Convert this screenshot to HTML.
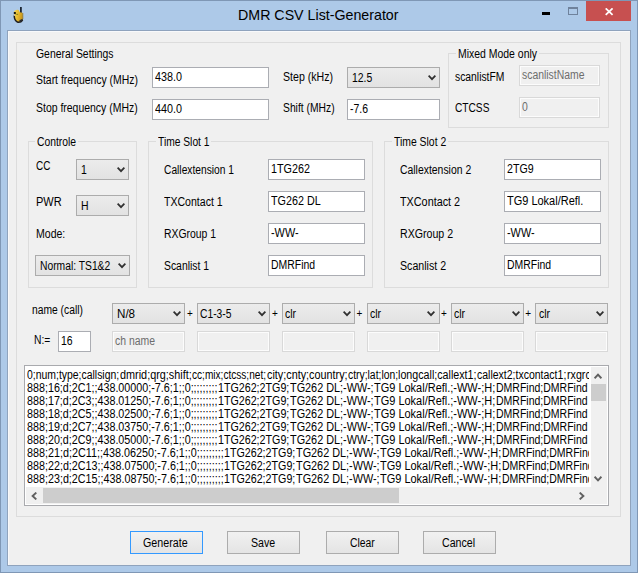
<!DOCTYPE html>
<html><head><meta charset="utf-8"><title>DMR CSV List-Generator</title>
<style>
html,body{margin:0;padding:0}
body{width:638px;height:573px;overflow:hidden;position:relative;background:#adc9e8;font-family:"Liberation Sans",Arial,sans-serif;font-size:12px;color:#000}
.abs,.t,.tb,.cb,.gb,.btn,.dtb{position:absolute;box-sizing:border-box}
#frame{left:0;top:0;width:638px;height:573px;border:1px solid #7f97b5}
#client{left:7px;top:30px;width:624px;height:536px;border:1px solid #8fa3bd;background:#f0f0f0;box-shadow:inset 1px 1px 0 #f8f9fb}
.t{white-space:nowrap;line-height:16px;height:16px;transform-origin:0 50%;transform:scaleX(0.87)}
.tb{background:#fff;border:1px solid #abadb3;height:21px}
.dtb{background:#f0f0f0;border:1px solid #d9d9d9;height:20px;box-shadow:inset 0 0 0 1px #fcfcfc}
.cb{background:linear-gradient(#ececec,#e2e2e2);border:1px solid #acacac;height:21px}
.gb{border:1px solid #dcdcdc}
.btn{background:linear-gradient(#f1f1f1,#e4e4e4);border:1px solid #acacac;height:23px}
.g{color:#6d6d6d}
</style></head><body>
<div id="frame" class="abs"></div>

<div class="abs" style="left:586px;top:1px;width:45px;height:20px;background:#c75050"></div>
<svg class="abs" style="left:605px;top:8px" width="9" height="8" viewBox="0 0 9 8"><path d="M0.7 0.4 L7.6 6.8 M7.6 0.4 L0.7 6.8" stroke="#fff" stroke-width="1.8" fill="none"/></svg>
<div class="abs" style="left:542px;top:12px;width:8px;height:3px;background:#000"></div>
<div class="abs" style="left:568px;top:7px;width:10px;height:8px;border:1px solid #6f829c;border-top-width:2px"></div>
<div class="t" style="left:238.2px;top:7.5px;transform:scaleX(0.9485);font-size:15px;line-height:20px;height:20px;top:5.1px;">DMR CSV List-Generator</div>
<svg class="abs" style="left:12px;top:5px" width="14" height="20" viewBox="12 5 14 20">
<defs><linearGradient id="ig" x1="0" y1="0" x2="1" y2="0.3"><stop offset="0" stop-color="#f3d654"/><stop offset="0.5" stop-color="#e8bc30"/><stop offset="1" stop-color="#c8961c"/></linearGradient></defs>
<rect x="20" y="7" width="1.8" height="9" fill="#1d2734"/>
<path d="M14.2 11.3 Q16.5 9.4 18.6 10 L19.8 12.2 L22.5 12.8 L22.8 20 Q20.5 23 17.3 22.2 Q14.2 20.5 14 16 Z" fill="url(#ig)"/>
<path d="M14.2 15.6 Q14.3 20.5 17.4 22.1 Q20.6 22.9 22.7 20" fill="none" stroke="#1e1e22" stroke-width="1.5"/>
<path d="M19.3 20.2 L22.6 18.8 L22.6 20.6 L20.2 22.3 Z" fill="#2a2a2c"/>
<path d="M22.8 13 L22.8 19" fill="none" stroke="#8a6a14" stroke-width="0.7"/>
<rect x="13.8" y="12" width="2" height="2.2" fill="#15150f"/>
<rect x="16.3" y="13.8" width="1.8" height="1.2" fill="#8e8a20"/>
<rect x="14" y="14.6" width="1" height="1" fill="#f4ecd0"/>
</svg>
<div id="client" class="abs"></div>
<div class="gb" style="left:16px;top:42px;width:605px;height:475px"></div>
<div class="t" style="left:35.5px;top:46px;transform:scaleX(0.867);">General Settings</div>
<div class="t" style="left:36.3px;top:71.6px;transform:scaleX(0.869);">Start frequency (MHz)</div>
<div class="t" style="left:36.3px;top:100px;transform:scaleX(0.8713);">Stop frequency (MHz)</div>
<div class="tb" style="left:152px;top:67px;width:117px;height:21px"></div>
<div class="t" style="left:155px;top:68.7px;transform:scaleX(0.8991);">438.0</div>
<div class="tb" style="left:152px;top:99px;width:117px;height:21px"></div>
<div class="t" style="left:155px;top:100.7px;transform:scaleX(0.8991);">440.0</div>
<div class="t" style="left:283px;top:68.8px;transform:scaleX(0.882);">Step (kHz)</div>
<div class="t" style="left:283px;top:99.8px;transform:scaleX(0.86);">Shift (MHz)</div>
<div class="cb" style="left:347px;top:67px;width:93px;height:21px"></div>
<svg class="abs" style="left:427.5px;top:75px" width="8" height="6" viewBox="0 0 8 6"><path d="M0.6 0.7 L4 4.2 L7.4 0.7" fill="none" stroke="#303030" stroke-width="1.8"/></svg>
<div class="t" style="left:351.5px;top:69.8px;">12.5</div>
<div class="tb" style="left:347px;top:99px;width:93px;height:21px"></div>
<div class="t" style="left:350px;top:100.7px;">-7.6</div>
<div class="gb" style="left:448px;top:53px;width:161px;height:75px"></div>
<div class="abs" style="left:455.6px;top:53px;width:83.0px;height:1px;background:#f0f0f0"></div>
<div class="t" style="left:457.6px;top:45.6px;transform:scaleX(0.8708);">Mixed Mode only</div>
<div class="t" style="left:454.6px;top:68.5px;transform:scaleX(0.8615);">scanlistFM</div>
<div class="t" style="left:454.6px;top:99.8px;transform:scaleX(0.8458);">CTCSS</div>
<div class="dtb" style="left:519px;top:65px;width:81px;height:20.5px"></div>
<div class="t g" style="left:522px;top:67px;transform:scaleX(0.8677);">scanlistName</div>
<div class="dtb" style="left:519px;top:97px;width:81px;height:20.5px"></div>
<div class="t g" style="left:522px;top:99px;">0</div>
<div class="gb" style="left:28px;top:141px;width:109px;height:146.5px"></div>
<div class="abs" style="left:34.6px;top:141px;width:43.1px;height:1px;background:#f0f0f0"></div>
<div class="t" style="left:36.6px;top:133.6px;transform:scaleX(0.862);">Controle</div>
<div class="t" style="left:35.6px;top:157.6px;transform:scaleX(0.8303);">CC</div>
<div class="t" style="left:36.3px;top:193.5px;transform:scaleX(0.9179);">PWR</div>
<div class="t" style="left:36.3px;top:226px;transform:scaleX(0.8783);">Mode:</div>
<div class="cb" style="left:76px;top:159px;width:53px;height:21px"></div>
<svg class="abs" style="left:116.5px;top:167px" width="8" height="6" viewBox="0 0 8 6"><path d="M0.6 0.7 L4 4.2 L7.4 0.7" fill="none" stroke="#303030" stroke-width="1.8"/></svg>
<div class="t" style="left:80.5px;top:161.8px;">1</div>
<div class="cb" style="left:76px;top:195px;width:53px;height:21px"></div>
<svg class="abs" style="left:116.5px;top:203px" width="8" height="6" viewBox="0 0 8 6"><path d="M0.6 0.7 L4 4.2 L7.4 0.7" fill="none" stroke="#303030" stroke-width="1.8"/></svg>
<div class="t" style="left:80.5px;top:197.8px;">H</div>
<div class="cb" style="left:35px;top:255px;width:95px;height:21px"></div>
<svg class="abs" style="left:117.5px;top:263px" width="8" height="6" viewBox="0 0 8 6"><path d="M0.6 0.7 L4 4.2 L7.4 0.7" fill="none" stroke="#303030" stroke-width="1.8"/></svg>
<div class="t" style="left:39.5px;top:257.8px;transform:scaleX(0.8581);">Normal: TS1&amp;2</div>
<div class="gb" style="left:148px;top:141px;width:225px;height:146.5px"></div>
<div class="abs" style="left:155.5px;top:141px;width:55.5px;height:1px;background:#f0f0f0"></div>
<div class="t" style="left:157.5px;top:133.6px;transform:scaleX(0.8548);">Time Slot 1</div>
<div class="t" style="left:164px;top:161.6px;transform:scaleX(0.853);">Callextension 1</div>
<div class="tb" style="left:268px;top:159px;width:97px;height:21px"></div>
<div class="t" style="left:271px;top:160.7px;transform:scaleX(0.8995);">1TG262</div>
<div class="t" style="left:164px;top:193.7px;transform:scaleX(0.88);">TXContact 1</div>
<div class="tb" style="left:268px;top:191px;width:97px;height:21px"></div>
<div class="t" style="left:271px;top:192.7px;transform:scaleX(0.8978);">TG262 DL</div>
<div class="t" style="left:164px;top:225.8px;transform:scaleX(0.8662);">RXGroup 1</div>
<div class="tb" style="left:268px;top:223px;width:97px;height:21px"></div>
<div class="t" style="left:271px;top:224.7px;transform:scaleX(0.9068);">-WW-</div>
<div class="t" style="left:164px;top:257.9px;transform:scaleX(0.8649);">Scanlist 1</div>
<div class="tb" style="left:268px;top:255px;width:97px;height:21px"></div>
<div class="t" style="left:271px;top:256.7px;">DMRFind</div>
<div class="gb" style="left:384px;top:141px;width:225px;height:146.5px"></div>
<div class="abs" style="left:391.8px;top:141px;width:56.19999999999999px;height:1px;background:#f0f0f0"></div>
<div class="t" style="left:393.8px;top:133.6px;transform:scaleX(0.8664);">Time Slot 2</div>
<div class="t" style="left:399.6px;top:161.6px;transform:scaleX(0.8676);">Callextension 2</div>
<div class="tb" style="left:504px;top:159px;width:97px;height:21px"></div>
<div class="t" style="left:507px;top:160.7px;transform:scaleX(0.8862);">2TG9</div>
<div class="t" style="left:399.6px;top:193.7px;transform:scaleX(0.901);">TXContact 2</div>
<div class="tb" style="left:504px;top:191px;width:97px;height:21px"></div>
<div class="t" style="left:507px;top:192.7px;transform:scaleX(0.9151);">TG9 Lokal/Refl.</div>
<div class="t" style="left:399.6px;top:225.8px;transform:scaleX(0.8845);">RXGroup 2</div>
<div class="tb" style="left:504px;top:223px;width:97px;height:21px"></div>
<div class="t" style="left:507px;top:224.7px;transform:scaleX(0.9068);">-WW-</div>
<div class="t" style="left:399.6px;top:257.9px;transform:scaleX(0.886);">Scanlist 2</div>
<div class="tb" style="left:504px;top:255px;width:97px;height:21px"></div>
<div class="t" style="left:507px;top:256.7px;">DMRFind</div>
<div class="t" style="left:31.8px;top:302px;transform:scaleX(0.8575);">name (call)</div>
<div class="t" style="left:34.3px;top:332px;transform:scaleX(0.8572);">N:=</div>
<div class="tb" style="left:58px;top:331px;width:33px;height:21px"></div>
<div class="t" style="left:61px;top:332.7px;">16</div>
<div class="cb" style="left:112px;top:303px;width:73px;height:21px"></div>
<svg class="abs" style="left:172.5px;top:311px" width="8" height="6" viewBox="0 0 8 6"><path d="M0.6 0.7 L4 4.2 L7.4 0.7" fill="none" stroke="#303030" stroke-width="1.8"/></svg>
<div class="t" style="left:116.5px;top:305.8px;transform:scaleX(0.9686);">N/8</div>
<div class="dtb" style="left:112px;top:331px;width:73px;height:21px"></div>
<div class="t g" style="left:115px;top:333px;">ch name</div>
<div class="cb" style="left:197px;top:303px;width:73px;height:21px"></div>
<svg class="abs" style="left:257.5px;top:311px" width="8" height="6" viewBox="0 0 8 6"><path d="M0.6 0.7 L4 4.2 L7.4 0.7" fill="none" stroke="#303030" stroke-width="1.8"/></svg>
<div class="t" style="left:200.3px;top:305.8px;transform:scaleX(0.8559);">C1-3-5</div>
<div class="dtb" style="left:197px;top:331px;width:73px;height:21px"></div>
<div class="t" style="left:187px;top:305.7px;transform:scaleX(1.0);font-size:10px;">+</div>
<div class="cb" style="left:282px;top:303px;width:73px;height:21px"></div>
<svg class="abs" style="left:342.5px;top:311px" width="8" height="6" viewBox="0 0 8 6"><path d="M0.6 0.7 L4 4.2 L7.4 0.7" fill="none" stroke="#303030" stroke-width="1.8"/></svg>
<div class="t" style="left:285.3px;top:305.8px;">clr</div>
<div class="dtb" style="left:282px;top:331px;width:73px;height:21px"></div>
<div class="t" style="left:272px;top:305.7px;transform:scaleX(1.0);font-size:10px;">+</div>
<div class="cb" style="left:366.5px;top:303px;width:73px;height:21px"></div>
<svg class="abs" style="left:427.0px;top:311px" width="8" height="6" viewBox="0 0 8 6"><path d="M0.6 0.7 L4 4.2 L7.4 0.7" fill="none" stroke="#303030" stroke-width="1.8"/></svg>
<div class="t" style="left:369.8px;top:305.8px;">clr</div>
<div class="dtb" style="left:366.5px;top:331px;width:73px;height:21px"></div>
<div class="t" style="left:356.5px;top:305.7px;transform:scaleX(1.0);font-size:10px;">+</div>
<div class="cb" style="left:451px;top:303px;width:73px;height:21px"></div>
<svg class="abs" style="left:511.5px;top:311px" width="8" height="6" viewBox="0 0 8 6"><path d="M0.6 0.7 L4 4.2 L7.4 0.7" fill="none" stroke="#303030" stroke-width="1.8"/></svg>
<div class="t" style="left:454.3px;top:305.8px;">clr</div>
<div class="dtb" style="left:451px;top:331px;width:73px;height:21px"></div>
<div class="t" style="left:441px;top:305.7px;transform:scaleX(1.0);font-size:10px;">+</div>
<div class="cb" style="left:535.3px;top:303px;width:73px;height:21px"></div>
<svg class="abs" style="left:595.8px;top:311px" width="8" height="6" viewBox="0 0 8 6"><path d="M0.6 0.7 L4 4.2 L7.4 0.7" fill="none" stroke="#303030" stroke-width="1.8"/></svg>
<div class="t" style="left:538.6px;top:305.8px;">clr</div>
<div class="dtb" style="left:535.3px;top:331px;width:73px;height:21px"></div>
<div class="t" style="left:525.3px;top:305.7px;transform:scaleX(1.0);font-size:10px;">+</div>
<div class="abs" style="left:24px;top:365px;width:585px;height:141px;background:#fff;border:1px solid #a9aaae"></div>
<div class="abs" style="left:26px;top:367px;width:563px;height:120px;overflow:hidden">
<div>
<span class="t" style="left:1px;top:0.3px;transform:scaleX(0.8693);">0;num;type;callsign;</span>
<span class="t" style="left:93.7px;top:0.3px;transform:scaleX(0.9047);">dmrid;qrg;shift;</span>
<span class="t" style="left:166px;top:0.3px;transform:scaleX(0.8408);">cc;mix;ctcss;net;</span>
<span class="t" style="left:240.5px;top:0.3px;transform:scaleX(0.9018);">city;cnty;country;</span>
<span class="t" style="left:321.6px;top:0.3px;transform:scaleX(0.8633);">ctry;lat;lon;</span>
<span class="t" style="left:372.2px;top:0.3px;transform:scaleX(0.8914);">longcall;callext1;</span>
<span class="t" style="left:451.2px;top:0.3px;transform:scaleX(0.875);">callext2;txcontact1;</span>
<span class="t" style="left:541.0px;top:0.3px;transform:scaleX(0.89);">rxgrc</span>
</div>
<div>
<span class="t" style="left:1px;top:13.3px;transform:scaleX(0.8951);">888;16;d;2C1;;438.00000;-7.6;1;;0;;;;;;;;;</span>
<span class="t" style="left:192px;top:13.3px;transform:scaleX(0.8907);">1TG262;2TG9;</span>
<span class="t" style="left:263.8px;top:13.3px;transform:scaleX(0.9041);">TG262 DL;-WW-;</span>
<span class="t" style="left:347.9px;top:13.3px;transform:scaleX(0.9149);">TG9 Lokal/Refl.;-WW-;H;</span>
<span class="t" style="left:469.6px;top:13.3px;transform:scaleX(0.875);">DMRFind;DMRFind</span>
</div>
<div>
<span class="t" style="left:1px;top:26.3px;transform:scaleX(0.8951);">888;17;d;2C3;;438.01250;-7.6;1;;0;;;;;;;;;</span>
<span class="t" style="left:192px;top:26.3px;transform:scaleX(0.8907);">1TG262;2TG9;</span>
<span class="t" style="left:263.8px;top:26.3px;transform:scaleX(0.9041);">TG262 DL;-WW-;</span>
<span class="t" style="left:347.9px;top:26.3px;transform:scaleX(0.9149);">TG9 Lokal/Refl.;-WW-;H;</span>
<span class="t" style="left:469.6px;top:26.3px;transform:scaleX(0.875);">DMRFind;DMRFind</span>
</div>
<div>
<span class="t" style="left:1px;top:39.3px;transform:scaleX(0.8951);">888;18;d;2C5;;438.02500;-7.6;1;;0;;;;;;;;;</span>
<span class="t" style="left:192px;top:39.3px;transform:scaleX(0.8907);">1TG262;2TG9;</span>
<span class="t" style="left:263.8px;top:39.3px;transform:scaleX(0.9041);">TG262 DL;-WW-;</span>
<span class="t" style="left:347.9px;top:39.3px;transform:scaleX(0.9149);">TG9 Lokal/Refl.;-WW-;H;</span>
<span class="t" style="left:469.6px;top:39.3px;transform:scaleX(0.875);">DMRFind;DMRFind</span>
</div>
<div>
<span class="t" style="left:1px;top:52.3px;transform:scaleX(0.8951);">888;19;d;2C7;;438.03750;-7.6;1;;0;;;;;;;;;</span>
<span class="t" style="left:192px;top:52.3px;transform:scaleX(0.8907);">1TG262;2TG9;</span>
<span class="t" style="left:263.8px;top:52.3px;transform:scaleX(0.9041);">TG262 DL;-WW-;</span>
<span class="t" style="left:347.9px;top:52.3px;transform:scaleX(0.9149);">TG9 Lokal/Refl.;-WW-;H;</span>
<span class="t" style="left:469.6px;top:52.3px;transform:scaleX(0.875);">DMRFind;DMRFind</span>
</div>
<div>
<span class="t" style="left:1px;top:65.3px;transform:scaleX(0.8951);">888;20;d;2C9;;438.05000;-7.6;1;;0;;;;;;;;;</span>
<span class="t" style="left:192px;top:65.3px;transform:scaleX(0.8907);">1TG262;2TG9;</span>
<span class="t" style="left:263.8px;top:65.3px;transform:scaleX(0.9041);">TG262 DL;-WW-;</span>
<span class="t" style="left:347.9px;top:65.3px;transform:scaleX(0.9149);">TG9 Lokal/Refl.;-WW-;H;</span>
<span class="t" style="left:469.6px;top:65.3px;transform:scaleX(0.875);">DMRFind;DMRFind</span>
</div>
<div>
<span class="t" style="left:1px;top:78.3px;transform:scaleX(0.8998);">888;21;d;2C11;;438.06250;-7.6;1;;0;;;;;;;;;</span>
<span class="t" style="left:198.2px;top:78.3px;transform:scaleX(0.8907);">1TG262;2TG9;</span>
<span class="t" style="left:270.0px;top:78.3px;transform:scaleX(0.9041);">TG262 DL;-WW-;</span>
<span class="t" style="left:354.1px;top:78.3px;transform:scaleX(0.9149);">TG9 Lokal/Refl.;-WW-;H;</span>
<span class="t" style="left:475.8px;top:78.3px;transform:scaleX(0.875);">DMRFind;DMRFind</span>
</div>
<div>
<span class="t" style="left:1px;top:91.3px;transform:scaleX(0.8961);">888;22;d;2C13;;438.07500;-7.6;1;;0;;;;;;;;;</span>
<span class="t" style="left:198.2px;top:91.3px;transform:scaleX(0.8907);">1TG262;2TG9;</span>
<span class="t" style="left:270.0px;top:91.3px;transform:scaleX(0.9041);">TG262 DL;-WW-;</span>
<span class="t" style="left:354.1px;top:91.3px;transform:scaleX(0.9149);">TG9 Lokal/Refl.;-WW-;H;</span>
<span class="t" style="left:475.8px;top:91.3px;transform:scaleX(0.875);">DMRFind;DMRFind</span>
</div>
<div>
<span class="t" style="left:1px;top:104.3px;transform:scaleX(0.8961);">888;23;d;2C15;;438.08750;-7.6;1;;0;;;;;;;;;</span>
<span class="t" style="left:198.2px;top:104.3px;transform:scaleX(0.8907);">1TG262;2TG9;</span>
<span class="t" style="left:270.0px;top:104.3px;transform:scaleX(0.9041);">TG262 DL;-WW-;</span>
<span class="t" style="left:354.1px;top:104.3px;transform:scaleX(0.9149);">TG9 Lokal/Refl.;-WW-;H;</span>
<span class="t" style="left:475.8px;top:104.3px;transform:scaleX(0.875);">DMRFind;DMRFind</span>
</div>
</div>
<div class="abs" style="left:591px;top:367px;width:16px;height:120px;background:#f0f0f0"></div>
<div class="abs" style="left:591px;top:384px;width:15px;height:17px;background:#cdcdcd"></div>
<svg class="abs" style="left:594.3px;top:373px" width="8" height="6" viewBox="0 0 8 6"><path d="M0.6 5.3 L4 1.6 L7.4 5.3" fill="none" stroke="#606060" stroke-width="1.9"/></svg>
<svg class="abs" style="left:594.3px;top:476px" width="8" height="6" viewBox="0 0 8 6"><path d="M0.6 0.7 L4 4.4 L7.4 0.7" fill="none" stroke="#606060" stroke-width="1.9"/></svg>
<div class="abs" style="left:26px;top:487px;width:581px;height:17px;background:#f0f0f0"></div>
<div class="abs" style="left:43px;top:488px;width:356px;height:15px;background:#cdcdcd"></div>
<svg class="abs" style="left:31px;top:491.5px" width="6" height="8" viewBox="0 0 6 8"><path d="M5.3 0.6 L1.6 4 L5.3 7.4" fill="none" stroke="#606060" stroke-width="1.9"/></svg>
<svg class="abs" style="left:579.2px;top:491.5px" width="6" height="8" viewBox="0 0 6 8"><path d="M0.7 0.6 L4.4 4 L0.7 7.4" fill="none" stroke="#606060" stroke-width="1.9"/></svg>
<div class="btn" style="left:130px;top:531px;width:73px;border-color:#3399ff"></div>
<div class="t" style="left:143.4px;top:535px;transform:scaleX(0.8912);">Generate</div>
<div class="btn" style="left:227px;top:531px;width:73px;border-color:#acacac"></div>
<div class="t" style="left:251px;top:535px;transform:scaleX(0.8845);">Save</div>
<div class="btn" style="left:326px;top:531px;width:73px;border-color:#acacac"></div>
<div class="t" style="left:349.6px;top:535px;transform:scaleX(0.8645);">Clear</div>
<div class="btn" style="left:423px;top:531px;width:73px;border-color:#acacac"></div>
<div class="t" style="left:442.4px;top:535px;transform:scaleX(0.886);">Cancel</div>
</body></html>
